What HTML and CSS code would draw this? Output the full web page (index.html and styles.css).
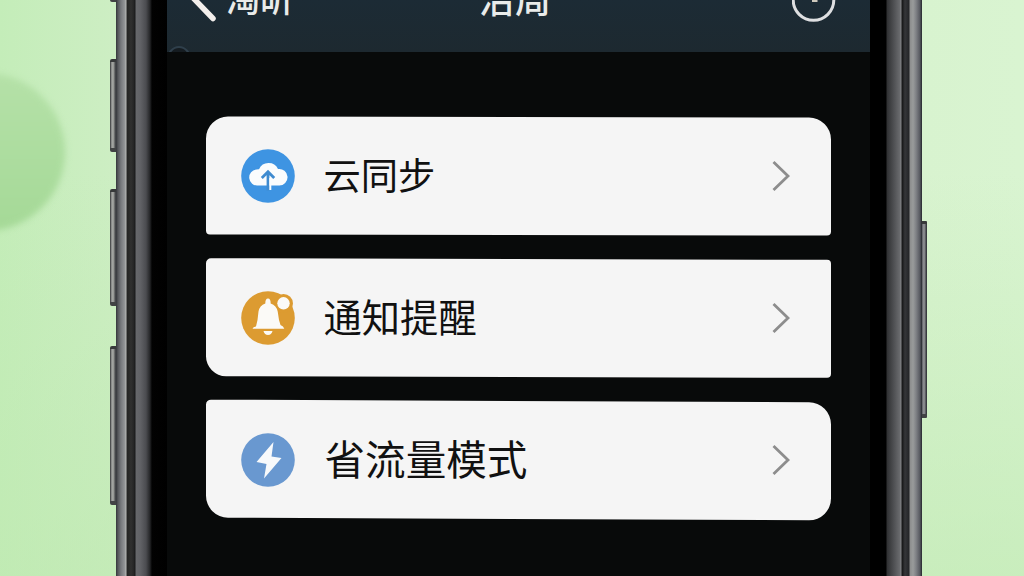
FILE: index.html
```html
<!DOCTYPE html>
<html lang="zh-CN">
<head>
  <meta charset="UTF-8">
  <meta name="viewport" content="width=device-width, initial-scale=1.0">
  <title>设置</title>
  <link rel="stylesheet" href="styles.css">
</head>
<body>
  <div class="blob"></div>

  <div class="phone">
    <!-- Side buttons -->
    <div class="key key-mute"></div>
    <div class="key key-up"></div>
    <div class="key key-down"></div>
    <div class="key key-low"></div>
    <div class="key key-power"></div>

    <div class="edge edge-left"></div>

    <div class="screen">
      <header class="topbar">
        <div class="back">
          <svg class="back-icon" width="36" height="60" viewBox="0 0 36 60">
            <path d="M28 48.500 L1 20.500 L21 0" fill="none" stroke="#f3efec" stroke-width="5.500" stroke-linecap="round"/>
          </svg>
          <span class="back-label">淘昕</span>
        </div>
        <h1 class="title">治周</h1>
        <svg class="clock-icon" width="44" height="44" viewBox="0 0 44 44">
          <circle cx="21.500" cy="22" r="20.300" fill="none" stroke="#dedfe1" stroke-width="3"/>
          <path d="M22 10 V22 H25.500" fill="none" stroke="#cfc9bd" stroke-width="4"/>
        </svg>
        <span class="arc"></span>
      </header>

      <main class="list">
        <div class="card card-sync">
          <svg class="icon" viewBox="0 0 54 54">
            <circle cx="27" cy="27" r="26.800" fill="#3e94e2"/>
            <path d="M17 36.500 A8 8 0 0 1 15.500 20.500 Q17.500 20 18 20.300 A10.500 10.500 0 0 1 37 20 A8.300 8.300 0 1 1 38 36.500 Z" fill="#fafcfd"/>
            <path d="M27 41.500 V24 M20.800 29 L27 22.800 L33.200 29" fill="none" stroke="#3e8bd0" stroke-width="2.800"/>
            <path d="M29.300 29 V41" stroke="#fafcfd" stroke-width="2"/>
          </svg>
          <span class="label">云同步</span>
          <svg class="arrow" viewBox="0 0 20 32"><path d="M2.500 2 L17 16 L2.500 30"/></svg>
        </div>

        <div class="card card-notice">
          <svg class="icon" viewBox="0 0 54 54">
            <circle cx="27" cy="27" r="26.800" fill="#dc9b31"/>
            <circle cx="42.500" cy="12.500" r="9.500" fill="#dc9b31"/>
            <path d="M11.500 37.800 Q12 36 15 35.500 L16.500 29 L17.500 20.500 Q18.500 14.500 24.300 12.500 Q24.300 7.500 27 7.500 Q29.700 7.500 29.700 12.500 Q35.500 14.500 36.700 20.500 L38 29 L39.500 34 Q42.500 35 43.300 37.800 Z" fill="#fbfaf7"/>
            <path d="M22.500 40 H31.500 Q30.500 44 27 44 Q23.500 44 22.500 40 Z" fill="#fbfaf7"/>
            <circle cx="42.500" cy="12.300" r="8" fill="#dc9b31"/>
            <circle cx="42.500" cy="12.300" r="6.200" fill="#fbfaf7"/>
          </svg>
          <span class="label">通知提醒</span>
          <svg class="arrow" viewBox="0 0 20 32"><path d="M2.500 2 L17 16 L2.500 30"/></svg>
        </div>

        <div class="card card-data">
          <svg class="icon" viewBox="0 0 54 54">
            <circle cx="27" cy="27" r="26.800" fill="#6998d0"/>
            <path d="M32.500 9 L15.500 29 L25.500 31 L23 45.500 L40.500 25 L30.500 23.500 Z" fill="#f7f9fb"/>
          </svg>
          <span class="label">省流量模式</span>
          <svg class="arrow" viewBox="0 0 20 32"><path d="M2.500 2 L17 16 L2.500 30"/></svg>
        </div>
      </main>
    </div>

    <div class="edge edge-right"></div>
  </div>
</body>
</html>
```
FILE: styles.css
```css
/* Base Reset */
* {
  box-sizing: border-box;
}

body {
  margin: 0;
  height: 576px;
  position: relative;
  overflow: hidden;
  font-family: "Noto Sans CJK SC", sans-serif;
  background: linear-gradient(to bottom, rgba(188, 233, 176, 0) 30%, rgba(190, 233, 176, 0.6) 100%),
    linear-gradient(to right, #c4edb9 0, #cdeec3 11%, #d8f3cf 90%, #d9f4d1 100%);
}

/* Soft circle behind the phone */
.blob {
  position: absolute;
  left: -94px;
  top: 73px;
  width: 159px;
  height: 158px;
  border-radius: 50%;
  background: linear-gradient(to bottom, #b5e1a8, #a5d997);
  filter: blur(3px);
}

.phone {
  position: relative;
  display: flex;
  width: 806px;
  height: 628px;
  margin: -52px 0 0 116px;
}

.edge {
  flex: none;
}

.edge-left {
  width: 51px;
  background: linear-gradient(to right,
    #34363a 0, #55575b 2px, #77797d 5px, #96989a 9px, #b9bab8 10px,
    #242424 11px, #30302f 15px, #252525 18px, #18191a 19px,
    #67686b 20px, #626367 24px, #4b4c50 30px, #242527 34px, #020202 36px, #000 51px);
}

.edge-right {
  width: 52px;
  background: linear-gradient(to right,
    #000 0, #000 16px, #303133 17px, #4b4c4f 23px, #6b6c6f 30px, #848588 31px,
    #151516 32px, #353639 35px, #242528 39px,
    #8c8d8d 40px, #999b9b 43px, #808286 46px, #56585f 50px, #25272d 52px);
}

/* Side buttons */
.key {
  position: absolute;
  left: -6px;
  width: 6px;
  border-radius: 2px 0 0 2px;
  background: linear-gradient(to right, #303234, #a6a8a5 2px, #929491 4px, #45474a 5px);
  border-top: 3px solid #37393a;
  border-bottom: 4px solid #414344;
}

.key-mute {
  top: 20px;
  height: 34px;
}

.key-up {
  top: 111px;
  height: 93px;
}

.key-down {
  top: 241px;
  height: 117px;
}

.key-low {
  top: 398px;
  height: 159px;
}

.key-power {
  left: 806px;
  top: 273px;
  width: 5px;
  height: 197px;
  border-radius: 0 1px 1px 0;
  background: linear-gradient(to right, #5a5c62, #999a9d 2px, #707276 3px, #25272c 5px);
}

/* Screen */
.screen {
  width: 703px;
  background: #080a0a;
}

.topbar {
  position: relative;
  display: flex;
  align-items: center;
  justify-content: space-between;
  height: 104px;
  padding: 0 34px 0 18px;
  background: linear-gradient(to bottom, #1c2b35 50%, #1d2930);
  overflow: hidden;
}

.back {
  display: flex;
  align-items: center;
  gap: 5px;
  width: 175px;
}

.back-label,
.title {
  color: #e9ebea;
  font-size: 34px;
  font-weight: 500;
  line-height: 40px;
  margin: 0;
  padding-bottom: 4px;
}

.title {
  font-size: 36px;
  margin-right: 122px;
  padding-bottom: 7px;
}

.arc {
  position: absolute;
  left: 0;
  bottom: -20px;
  width: 24px;
  height: 26px;
  border: 2px solid #2f3f4b;
  border-radius: 50%;
  background: #151c21;
}

/* Setting cards */
.list {
  display: flex;
  flex-direction: column;
  gap: 24.500px;
  padding: 65px 39px 0;
}

.card {
  position: relative;
  z-index: 0;
  display: flex;
  align-items: center;
  height: 117.500px;
  padding: 0 40px 0 35px;
}

/* Card face, tilted a little on its own so the text stays straight */
.card::before {
  content: "";
  position: absolute;
  inset: 0;
  z-index: -1;
  background: #f5f5f5;
  border-radius: 22px 22px 4px 4px;
  transform: skewY(0.1deg);
}

.card-notice::before {
  border-radius: 5px 4px 4px 20px;
  transform: skewY(0.15deg);
}

.card-data::before {
  border-radius: 5px 22px 22px 22px;
  transform: skewY(0.25deg);
}

.icon {
  flex: none;
  width: 54px;
  height: 54px;
}

.label {
  flex: 1;
  margin-left: 28.500px;
  padding-bottom: 4px;
  color: #111;
  font-size: 37.300px;
  line-height: 54px;
}

.card-notice .label {
  font-size: 38.300px;
}

.card-data .label {
  margin-left: 29.500px;
  font-size: 40.600px;
}

.arrow {
  flex: none;
  width: 20px;
  height: 32px;
}

.arrow path {
  fill: none;
  stroke: #8d8d8d;
  stroke-width: 2.800;
}
```
